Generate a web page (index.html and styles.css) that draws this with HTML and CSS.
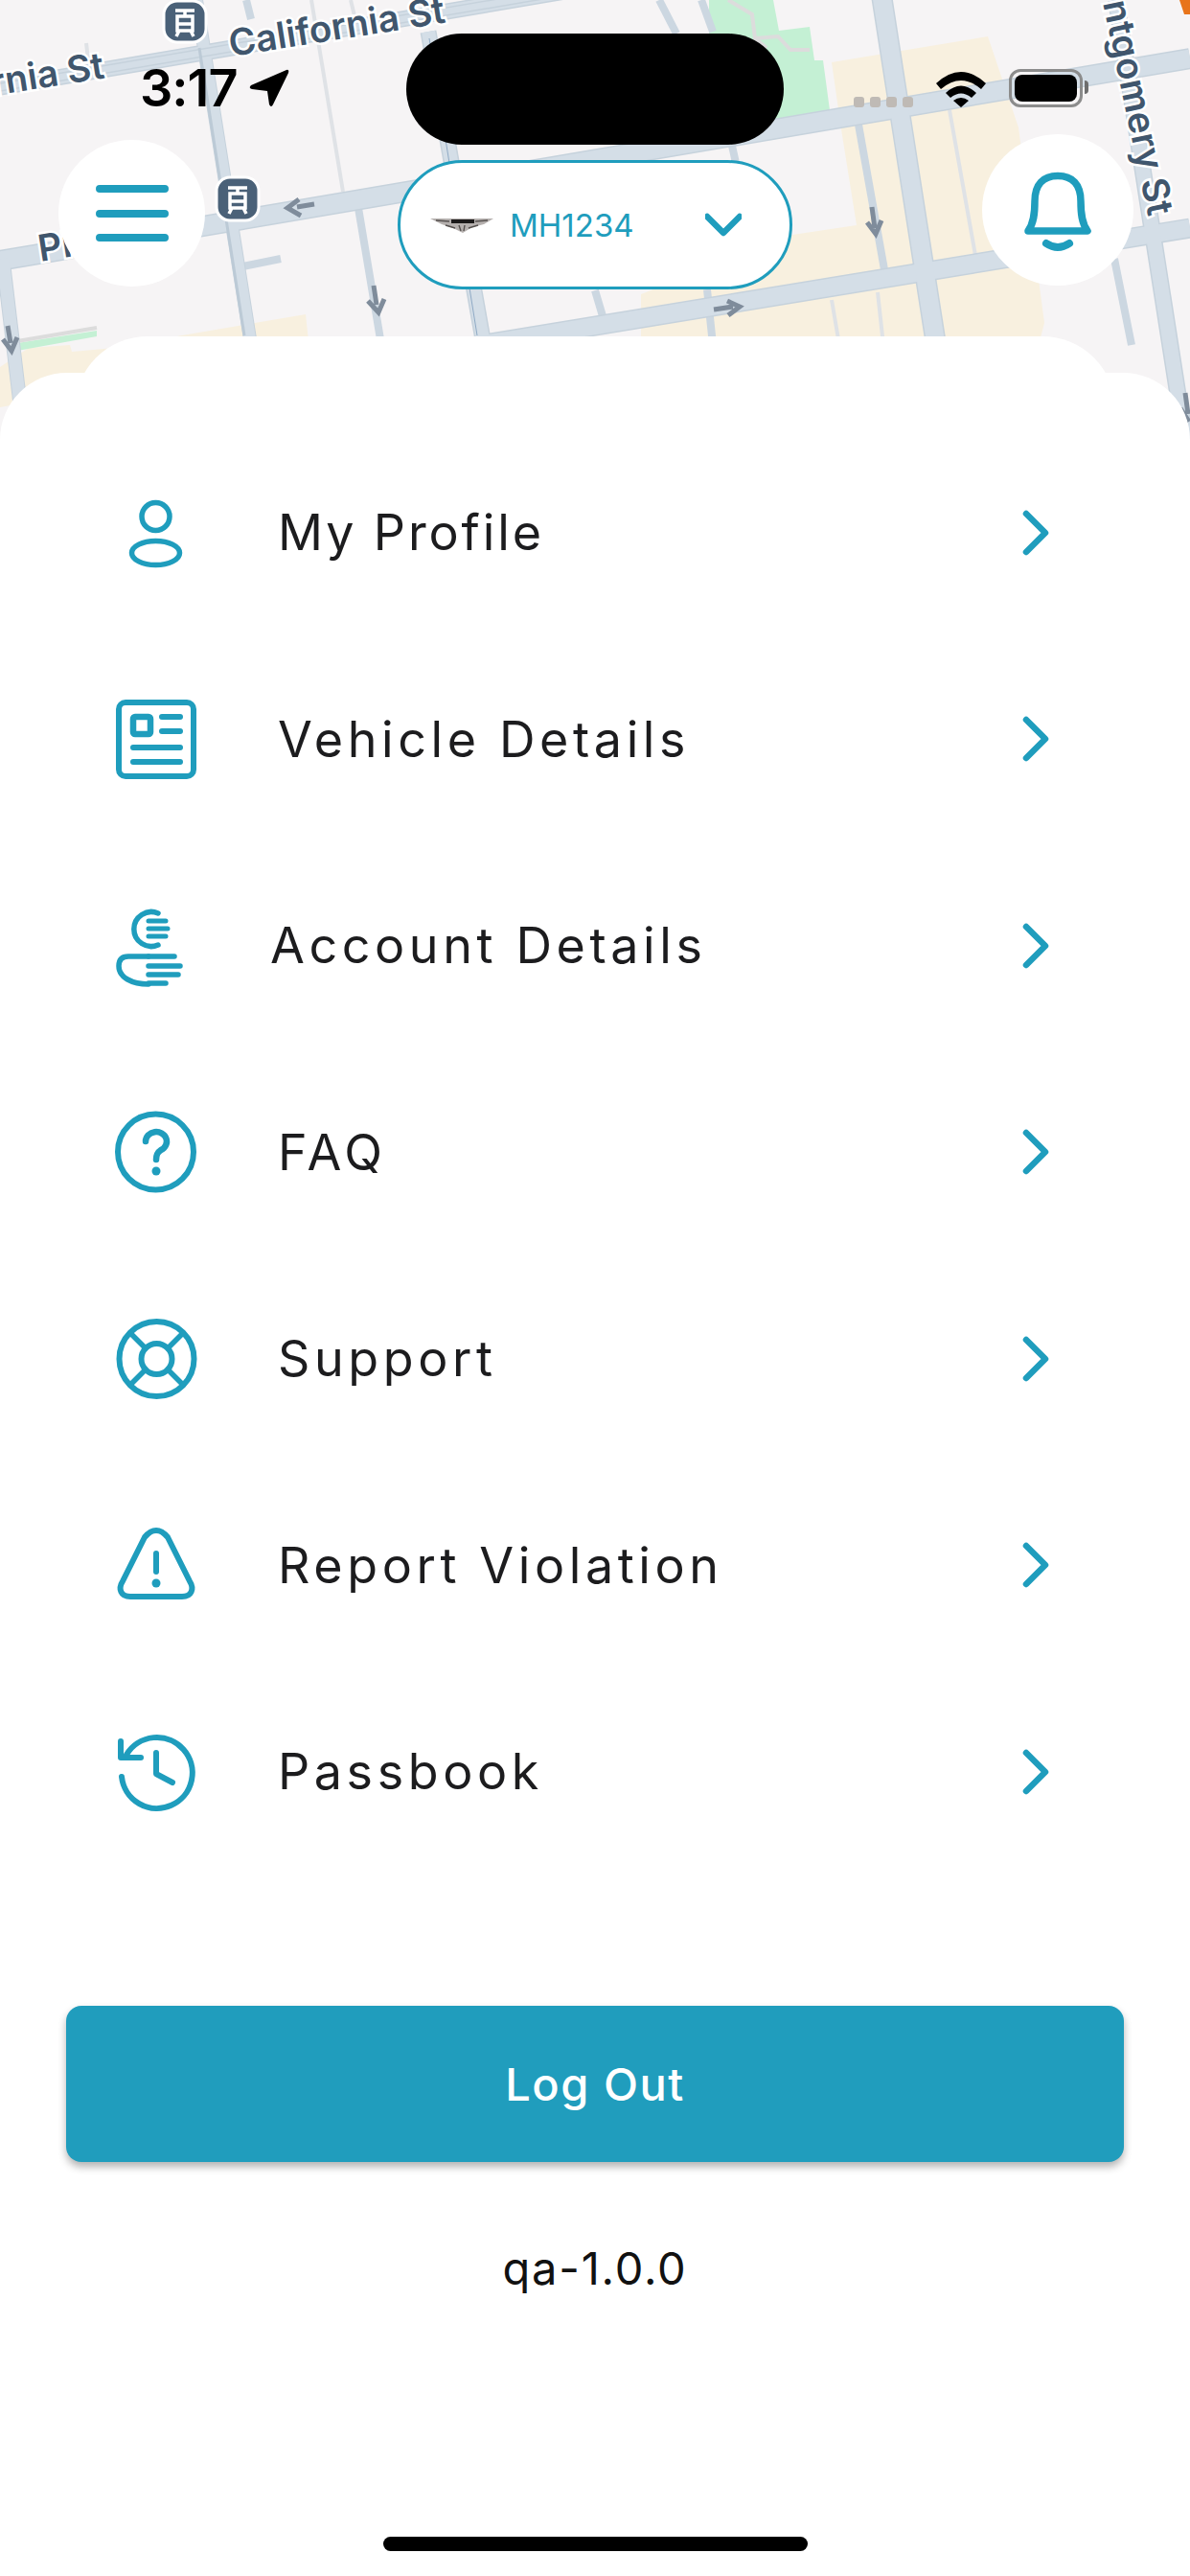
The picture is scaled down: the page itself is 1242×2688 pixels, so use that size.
FILE: index.html
```html
<!DOCTYPE html>
<html lang="en">
<head>
    <meta charset="UTF-8">
    <meta name="viewport" content="width=device-width, initial-scale=1.0">
    <title>Menu</title>
    <link rel="stylesheet" href="styles.css">
</head>
<body>
    <div class="screen">
        <!-- map behind everything -->
        <svg class="map" viewBox="0 0 1242 460" width="1242" height="460">
            <rect width="1242" height="460" fill="#f6f4f5"/>
            <polygon points="868,65 1031,38 1063,133 1090,337 1084,360 669,360 669,307 827,245 894,235 878,135" fill="#f8f0df"/>
            <polygon points="0,383 30,363 73,360 75,367 120,363 190,350 319,328 323,365 0,425" fill="#f8f0df"/>
            <polygon points="740,0 807,0 813,32 845,28 850,63 859,63 866,115 760,140 740,60" fill="#c4f0d4"/>
            <path d="M760 0 L785 15 L788 40 L812 38 L825 52 L845 52 M788 40 L800 50" class="path"/>
            <polygon points="18,358 101,345 101,351 18,366" fill="#c4f0d4"/>
            <path d="M18 356 L101 342" class="path"/>

            <g class="road-thin">
                <path d="M325 0 L358 200"/>
                <path d="M366 0 L372 25"/>
                <path d="M991 115 L1019 272"/>
                <path d="M868 313 L876 360"/>
                <path d="M916 305 L922 360"/>
                <path d="M90 45 L92 62"/>
            </g>
            <g class="road-mid">
                <path d="M257 0 L262 20"/>
                <path d="M374 217 L398 360"/>
                <path d="M688 0 L706 35"/>
                <path d="M732 0 L744 33"/>
                <path d="M764 152 L768 170"/>
                <path d="M621 303 L629 330"/>
                <path d="M738 302 L744 360"/>
                <path d="M896 130 L924 287"/>
                <path d="M1163 270 L1181 360"/>
                <path d="M253 278 L293 270"/>
            </g>
            <!-- road edge first, then the fill on top of it -->
            <g class="road-edge">
                <path d="M0 91 L590 -9" stroke-width="17"/>
                <path d="M0 272 L1242 61" stroke-width="22"/>
                <path d="M500 360 L1242 238" stroke-width="21"/>
                <path d="M205 0 L262 360" stroke-width="14"/>
                <path d="M447 33 L505 360" stroke-width="17"/>
                <path d="M920 -5 L977 360" stroke-width="22"/>
                <path d="M1165 0 L1237 460" stroke-width="18"/>
                <path d="M3 270 L22 430" stroke-width="15"/>
            </g>
            <g class="road-main">
                <path d="M0 91 L590 -9" stroke-width="14"/>
                <path d="M0 272 L1242 61" stroke-width="19"/>
                <path d="M500 360 L1242 238" stroke-width="18"/>
                <path d="M205 0 L262 360" stroke-width="12"/>
                <path d="M447 33 L505 360" stroke-width="14"/>
                <path d="M920 -5 L977 360" stroke-width="19"/>
                <path d="M1165 0 L1237 460" stroke-width="15"/>
                <path d="M3 270 L22 430" stroke-width="13"/>
            </g>
            <path d="M0 87 L590 -13 M0 95 L590 -5" class="cable"/>
            <path d="M208 50 L255 350" class="cable-dark"/>
            <path d="M448 40 L498 350" stroke="#8ea9c4" stroke-width="1" fill="none"/>

            <g class="arrow">
                <path d="M328 213 L310 216 M312 208 L300 217 L314 225"/>
                <path d="M390 298 L393 318 M384 314 L395 326 L401 312"/>
                <path d="M8 340 L11 358 M3 354 L12 366 L18 352"/>
                <path d="M910 216 L913 238 M905 232 L914 244 L920 230"/>
                <path d="M745 323 L765 320 M759 314 L772 320 L760 329"/>
                <path d="M1237 410 L1240 432 M1232 426 L1241 440"/>
            </g>

            <g class="map-label">
                <text transform="translate(-8 100) rotate(-9)">rnia St</text>
                <text transform="translate(241 59) rotate(-9)">California St</text>
                <text transform="translate(42 273) rotate(-9)">Pi</text>
                <text transform="translate(1151 3) rotate(78)">ntgomery St</text>
            </g>

            <g class="tram">
                <rect x="171" y="1" width="44" height="43" rx="14"/>
                <path d="M183 11 H203 M193 11 V17 M185 17 H201 V32 H185 Z M185 25 H201 M187 32 L184 38 M199 32 L202 38"/>
            </g>
            <g class="tram">
                <rect x="226" y="185" width="44" height="45" rx="14"/>
                <path d="M238 196 H258 M248 196 V202 M240 202 H256 V217 H240 Z M240 210 H256 M242 217 L239 223 M254 217 L257 223"/>
            </g>
            <polygon points="1231,0 1242,0 1242,15 1236,15" fill="#e8741a"/>
        </svg>

        <div class="notch"></div>

        <div class="status-bar">
            <div class="status-left">
                <span class="time">3:17</span>
                <svg class="location" viewBox="0 0 42 40" width="42" height="40">
                    <path d="M39 1 L2 17 Q-1 20 3 21 L19 23 L21 37 Q23 41 25 37 L41 4 Q42 0 39 1 Z" fill="#000"/>
                </svg>
            </div>
            <div class="status-right">
                <div class="signal-dots"><i></i><i></i><i></i><i></i></div>
                <svg class="wifi" viewBox="0 0 54 40" width="54" height="40">
                    <path d="M1 15 Q27 -9 53 15 L48 21 Q27 3 6 21 Z M11 25 Q27 10 43 25 L38 30 Q27 21 16 30 Z M19 33 Q27 27 35 33 L27 40 Z" fill="#000"/>
                </svg>
                <div class="battery"><div class="battery-fill"></div></div>
            </div>
        </div>

        <div class="top-bar">
            <button class="round-btn menu-btn">
                <svg viewBox="0 0 76 60" width="76" height="60">
                    <path d="M4 4 H72 M4 30 H72 M4 55 H72" class="icon-line" stroke-width="8"/>
                </svg>
            </button>
            <div class="vehicle-select">
                <svg class="car-logo" viewBox="0 0 66 16" width="66" height="16">
                    <path d="M0 1 L66 1 L56 7 L44 10 L34 16 L24 11 L12 7 Z" fill="#b5b0ae"/>
                    <path d="M22 2 H46 V6 H22 Z" fill="#1c1a1a"/>
                    <path d="M6 3 L20 4 M60 3 L47 4 M16 8 L26 11 M50 8 L40 11 M30 8 L32 14 M36 8 L35 14" stroke="#55504e" stroke-width="1.4" fill="none"/>
                </svg>
                <span class="vehicle-no">MH1234</span>
                <svg class="select-arrow" viewBox="0 0 38 26" width="38" height="26">
                    <path d="M2 4 L19 21 L36 4" class="icon-line" stroke-width="6.5" stroke-linecap="butt"/>
                </svg>
            </div>
            <button class="round-btn bell-btn">
                <svg viewBox="0 0 88 100" width="88" height="100">
                    <path d="M13 72 C19 64 20 54 20 41 C20 23 29 14.5 44 14.5 C59 14.5 68 23 68 41 C68 54 69 64 75 72 Z" class="icon-line" stroke-width="7.5"/>
                    <path d="M32 85 Q44 93 56 85" class="icon-line" stroke-width="8"/>
                </svg>
            </button>
        </div>

        <div class="sheet">
            <ul class="menu">
                <li class="menu-row">
                    <svg class="menu-icon" viewBox="0 0 90 90" width="90" height="90">
                        <circle cx="44.5" cy="28" r="14.5" class="icon-line" stroke-width="5.5"/>
                        <ellipse cx="44.5" cy="66" rx="25" ry="12.5" class="icon-line" stroke-width="5.5"/>
                    </svg>
                    <span class="menu-label menu-label-tight">My Profile</span>
                    <svg class="menu-chevron" viewBox="0 0 30 50" width="30" height="50"><path d="M5 5 L25 25 L5 45" class="icon-line" stroke-width="6.5"/></svg>
                </li>
                <li class="menu-row">
                    <svg class="menu-icon" viewBox="0 0 90 90" width="90" height="90">
                        <rect x="6" y="7" width="78" height="77" rx="7" class="icon-line" stroke-width="6"/>
                        <rect x="21" y="22" width="18" height="18" rx="2" class="icon-line" stroke-width="6.5"/>
                        <path d="M51 22 H70 M51 37 H70 M21 54 H70 M21 69 H70" class="icon-line" stroke-width="6"/>
                    </svg>
                    <span class="menu-label">Vehicle Details</span>
                    <svg class="menu-chevron" viewBox="0 0 30 50" width="30" height="50"><path d="M5 5 L25 25 L5 45" class="icon-line" stroke-width="6.5"/></svg>
                </li>
                <li class="menu-row menu-row-shift">
                    <svg class="menu-icon" viewBox="0 0 90 90" width="90" height="90">
                        <path d="M47 11 A18 18 0 1 0 47 44" class="icon-line" stroke-width="5.5"/>
                        <path d="M37 19 H55 M37 27 H57 M37 35 H55" class="icon-line" stroke-width="5" stroke-linecap="butt"/>
                        <path d="M37 56 H16 C8 56 6 61 6 66 C6 78 20 85 37 85" class="icon-line" stroke-width="5.5"/>
                        <path d="M37 56 H64 M37 66 H70 M37 75 H68 M37 84 H55" class="icon-line" stroke-width="5.5" stroke-linecap="butt"/>
                    </svg>
                    <span class="menu-label">Account Details</span>
                    <svg class="menu-chevron" viewBox="0 0 30 50" width="30" height="50"><path d="M5 5 L25 25 L5 45" class="icon-line" stroke-width="6.5"/></svg>
                </li>
                <li class="menu-row">
                    <svg class="menu-icon" viewBox="0 0 90 90" width="90" height="90">
                        <circle cx="44.5" cy="45" r="39.5" class="icon-line" stroke-width="6"/>
                        <path d="M34 34 A11 10 0 1 1 50 43 C47 45 45 47 45 53" class="icon-line" stroke-width="6.5"/>
                        <circle cx="45" cy="65" r="4.5" fill="#1f9dbd"/>
                    </svg>
                    <span class="menu-label">FAQ</span>
                    <svg class="menu-chevron" viewBox="0 0 30 50" width="30" height="50"><path d="M5 5 L25 25 L5 45" class="icon-line" stroke-width="6.5"/></svg>
                </li>
                <li class="menu-row">
                    <svg class="menu-icon" viewBox="0 0 90 90" width="90" height="90">
                        <circle cx="45.5" cy="45" r="39" class="icon-line" stroke-width="6"/>
                        <circle cx="45.5" cy="45" r="16" class="icon-line" stroke-width="6"/>
                        <path d="M34 34 L18 18 M57 34 L73 18 M34 56 L18 72 M57 56 L73 72" class="icon-line" stroke-width="5.5" stroke-linecap="butt"/>
                    </svg>
                    <span class="menu-label">Support</span>
                    <svg class="menu-chevron" viewBox="0 0 30 50" width="30" height="50"><path d="M5 5 L25 25 L5 45" class="icon-line" stroke-width="6.5"/></svg>
                </li>
                <li class="menu-row">
                    <svg class="menu-icon" viewBox="0 0 90 90" width="90" height="90">
                        <path d="M33 16 C38 10 41 9 45 9 C49 9 52 10 57 16 L80 62 C85 70 82 78 72 78 H18 C8 78 5 70 10 62 Z" class="icon-line" stroke-width="6"/>
                        <path d="M45 33 V52" class="icon-line" stroke-width="6"/>
                        <circle cx="45" cy="64" r="4.5" fill="#1f9dbd"/>
                    </svg>
                    <span class="menu-label">Report Violation</span>
                    <svg class="menu-chevron" viewBox="0 0 30 50" width="30" height="50"><path d="M5 5 L25 25 L5 45" class="icon-line" stroke-width="6.5"/></svg>
                </li>
                <li class="menu-row">
                    <svg class="menu-icon" viewBox="0 0 90 90" width="90" height="90">
                        <path d="M14 27 A37 37 0 1 1 9 50" class="icon-line" stroke-width="6"/>
                        <path d="M8 13 V30 H29" class="icon-line" stroke-width="6"/>
                        <path d="M45 25 V47 L62 56" class="icon-line" stroke-width="6"/>
                    </svg>
                    <span class="menu-label">Passbook</span>
                    <svg class="menu-chevron" viewBox="0 0 30 50" width="30" height="50"><path d="M5 5 L25 25 L5 45" class="icon-line" stroke-width="6.5"/></svg>
                </li>
            </ul>

            <button class="logout-btn">Log Out</button>
            <p class="version">qa-1.0.0</p>
            <div class="home-indicator"></div>
        </div>
    </div>
</body>
</html>
```

FILE: styles.css
```css
* {
    box-sizing: border-box;
}

body {
    margin: 0;
    font-family: Inter, "Noto Sans", sans-serif;
    background-color: #fff;
}

button {
    font-family: inherit;
    border: none;
    padding: 0;
}

.screen {
    position: relative;
    width: 1242px;
    height: 2688px;
    overflow: hidden;
    display: flex;
    flex-direction: column;
}

/* map */
.map {
    position: absolute;
    top: 0;
    left: 0;
}

.path {
    fill: none;
    stroke: #dcdcdc;
    stroke-width: 4;
}

.road-main path,
.road-edge path,
.road-mid path,
.road-thin path {
    fill: none;
    stroke: #d4dee7;
}

.road-edge path {
    stroke: #c6d2dc;
}

.road-mid path {
    stroke: #ccd7e1;
    stroke-width: 8;
}

.road-thin path {
    stroke: #dfe2e6;
    stroke-width: 4;
}

.cable {
    fill: none;
    stroke: #c6d2dc;
    stroke-width: 1.5;
}

.cable-dark {
    fill: none;
    stroke: #bccad6;
    stroke-width: 3;
}

.arrow path {
    fill: none;
    stroke: #7f8c9b;
    stroke-width: 5;
}

.map-label text {
    font-family: Inter, sans-serif;
    font-size: 38.5px;
    font-weight: 600;
    fill: #40566d;
    stroke: #fff;
    stroke-width: 5px;
    paint-order: stroke;
}

.tram rect {
    fill: #4a6178;
    stroke: #fff;
    stroke-width: 3;
}

.tram path {
    fill: none;
    stroke: #fff;
    stroke-width: 3.5;
}

.notch {
    position: absolute;
    top: 35px;
    left: 424px;
    width: 394px;
    height: 116px;
    background: #000;
    border-radius: 58px;
}

/* status bar */
.status-bar {
    position: relative;
    height: 140px;
    padding: 72px 112px 0 146px;
    display: flex;
    justify-content: space-between;
    align-items: flex-start;
}

.status-left {
    display: flex;
    align-items: center;
    gap: 12px;
}

.time {
    font-size: 54px;
    line-height: 40px;
    font-weight: 600;
    letter-spacing: -1px;
    color: #000;
}

.status-right {
    display: flex;
    align-items: flex-end;
    height: 40px;
    gap: 23px;
}

.signal-dots {
    display: flex;
    gap: 6px;
}

.signal-dots i {
    width: 11px;
    height: 11px;
    border-radius: 3px;
    background: #bfbab5;
}

.battery {
    position: relative;
    width: 77px;
    height: 40px;
    padding: 3px;
    border: 3px solid #8c8c8c;
    border-radius: 12px;
}

.battery::after {
    content: "";
    position: absolute;
    top: 9px;
    right: -9px;
    width: 4px;
    height: 14px;
    background: #6e6e6e;
    border-radius: 0 4px 4px 0;
}

.battery-fill {
    height: 100%;
    background: #000;
    border-radius: 8px;
}

/* top bar */
.top-bar {
    position: relative;
    height: 249px;
    padding: 0 59px 0 61px;
    display: flex;
    justify-content: space-between;
    align-items: flex-start;
}

.round-btn {
    display: flex;
    align-items: center;
    justify-content: center;
    border-radius: 50%;
    background: #fff;
}

.menu-btn {
    width: 153px;
    height: 153px;
    margin-top: 6px;
}

.bell-btn {
    width: 158px;
    height: 158px;
}

.vehicle-select {
    width: 412px;
    height: 135px;
    margin: 27px 0 0 3px;
    padding: 0 50px 0 31px;
    display: flex;
    align-items: center;
    background: #fff;
    border: 3px solid #1f9dbd;
    border-radius: 68px;
}

.vehicle-no {
    margin-left: 17px;
    font-size: 33px;
    color: #1f9dbd;
}

.select-arrow {
    margin-left: auto;
}

.icon-line {
    fill: none;
    stroke: #1f9dbd;
    stroke-linecap: round;
    stroke-linejoin: round;
}

/* menu sheet */
.sheet {
    position: relative;
    flex: 1;
    padding-top: 59px;
    background: #fff;
    border-radius: 70px 70px 0 0;
}

.sheet::before {
    content: "";
    position: absolute;
    top: -38px;
    left: 78px;
    right: 78px;
    height: 120px;
    background: #fff;
    border-radius: 76px 76px 0 0;
}

.menu {
    position: relative;
    list-style: none;
    margin: 0;
    padding: 0;
}

.menu-row {
    height: 215.5px;
    padding: 0 146px 0 118px;
    display: flex;
    align-items: center;
}

.menu-label {
    margin-left: 82px;
    font-size: 52px;
    letter-spacing: 4.6px;
    color: #1c1c1e;
}

.menu-label-tight {
    letter-spacing: 2.9px;
}

.menu-row-shift .menu-label {
    margin-left: 74px;
}

.menu-chevron {
    margin-left: auto;
}

.logout-btn {
    display: block;
    width: 1104px;
    height: 163px;
    margin: 136.5px 0 0 69px;
    font-size: 47px;
    font-weight: 500;
    letter-spacing: 1.5px;
    color: #fff;
    background: #209dbd;
    border-radius: 16px;
    box-shadow: 0 5px 9px rgba(0, 0, 0, 0.3);
}

.version {
    margin: 76px 0 0;
    text-align: center;
    font-size: 47px;
    letter-spacing: 1.8px;
    line-height: 70px;
    color: #111;
}

.home-indicator {
    position: absolute;
    bottom: 26px;
    left: 400px;
    width: 443px;
    height: 15px;
    border-radius: 8px;
    background: #000;
}
```
